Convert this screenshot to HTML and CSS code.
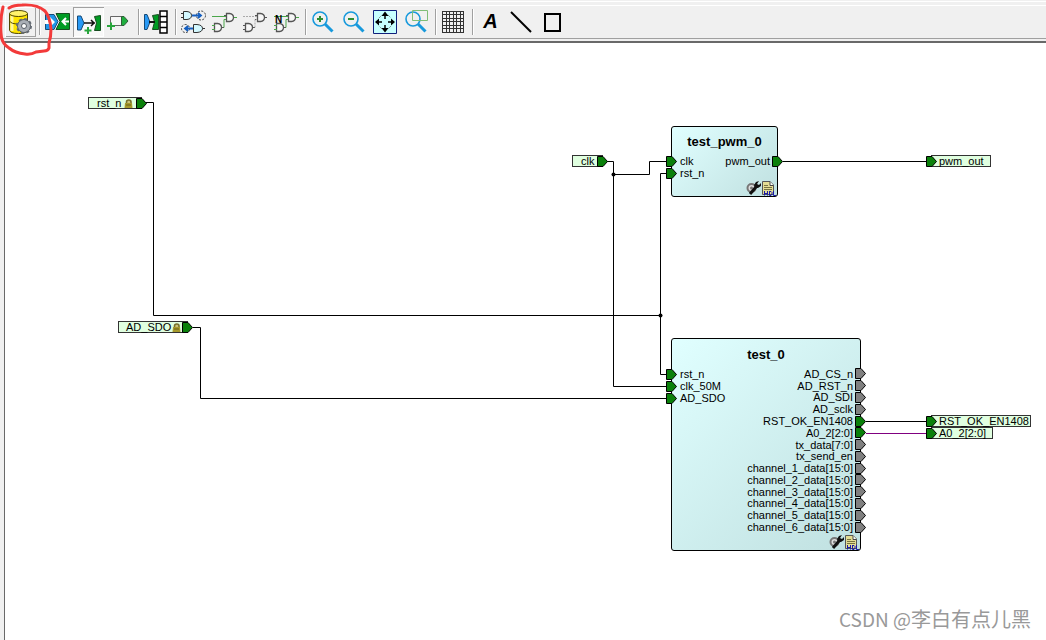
FILE: index.html
```html
<!DOCTYPE html>
<html lang="en">
<head>
<meta charset="utf-8">
<title>SmartDesign canvas</title>
<link rel="stylesheet" href="styles.css">
</head>
<body>
<svg class="defs" aria-hidden="true">
  <defs>
    <symbol id="pin" viewBox="0 0 11 11"><path d="M.5 .5H6L10.5 5.5L6 10.5H.5Z" stroke="#000"/></symbol>
    <symbol id="lock" viewBox="0 0 9 9"><path d="M2.5 5V3Q2.5 1 4.8 1Q7 1 7 3V5" fill="#c9c27a" stroke="#77702b" stroke-width="1.6"/><path d="M1 4H8L8.5 9H.5Z" fill="#a69a2c"/><path d="M2 6H7" stroke="#685e18"/></symbol>
    <symbol id="tools" viewBox="0 0 31 16">
      <circle cx="5.500" cy="8" r="4" fill="#ddd" stroke="#777" stroke-width="2"/><circle cx="5.500" cy="8" r="1.500" fill="#777"/>
      <path d="M4 14L10 7" stroke="#111" stroke-width="3"/><path d="M9 8L8 5L10 2L13 1L11 4L13 5L15 3V6L12 8Z" fill="#111"/>
      <path d="M16.500 1.500H24L27.500 5V14.500H16.500Z" fill="#e3dc94" stroke="#555"/><path d="M24 1.500V5.500H27.500" fill="#fff" stroke="#444"/><path d="M18 5.500H22M18 7.500H26M18 9.500H26" stroke="#77733f"/>
      <path d="M18.500 11V15.500M21.500 11V15.500M18.500 13.500H21.500M23.500 11V15.500H25L26 14V12.500L25 11.500H23.500M27.500 11V15.500H30" fill="none" stroke="#1a1aa8"/>
    </symbol>
    <symbol id="gate" viewBox="0 0 12 12"><path d="M2.500 1.500H5.500Q9.500 2 9.500 5.500Q9.500 9 5.500 9.500H2.500Z" fill="#f7f7f7" stroke="#555" stroke-width="1.300"/><path d="M0 3.500H2M0 7.500H2M10 5.500H12" stroke="#555"/></symbol>
    <symbol id="glass" viewBox="0 0 31 30"><path d="M17 17L24.500 24.500" stroke="#1799dc" stroke-width="3"/><circle cx="12" cy="12" r="7" fill="none" stroke="#1799dc" stroke-width="1.600"/></symbol>
  </defs>
</svg>

<header class="toolbar" role="toolbar" aria-label="Canvas tools">
  <button class="tool raised" aria-label="Generate component"><svg class="icon" viewBox="0 0 31 30">
    <path d="M4.500 6.500V23Q5 26.500 13.500 26.500T22.500 23V6.500" fill="#ffe500" stroke="#4f4700"/><path d="M7 9V24" stroke="#fff79a" stroke-width="3"/><ellipse cx="13.500" cy="6.500" rx="9" ry="3" fill="#fff36b" stroke="#4f4700"/><path d="M4.500 14Q6 17 13.500 17T22.500 14" fill="none" stroke="#4f4700"/>
    <circle cx="19" cy="19" r="6.500" fill="#a9aeb5" stroke="#555b63"/><circle cx="19" cy="19" r="7" fill="none" stroke="#656b73" stroke-width="2" stroke-dasharray="3 2.500"/><circle cx="19" cy="19" r="5.500" fill="#a9aeb5"/><circle cx="19" cy="19" r="2.500" fill="#fff" stroke="#555b63"/></svg></button>
  <span class="separator"></span>
  <button class="tool" aria-label="Auto connect"><svg class="icon" viewBox="0 0 31 30">
    <path d="M3.500 7.500H12L16 14.500L12 22.500H3.500Z" fill="#1f96e8" stroke="#174a75"/><path d="M3 13H8V10L13 15L8 20V17H3Z" fill="#fff"/><path d="M14 6.500H27.500V22.500H14L18 14.500Z" fill="#009b23" stroke="#174d20"/><path d="M27 14.500H21M24 11L20.500 14.500L24 18" fill="none" stroke="#fff" stroke-width="2"/></svg></button>
  <button class="tool pressed" aria-label="Connection mode" aria-pressed="true"><svg class="icon" viewBox="0 0 31 30">
    <path d="M4.500 9H8L11 16L8 23H4.500Z" fill="#2899f5" stroke="#174a75"/><path d="M21.500 9.500L27.500 8.500V23.500H21.500L23.500 16Z" fill="#009b23" stroke="#174d20"/><path d="M11 16H22M18 13L21 16L18 19" fill="none" stroke="#111" stroke-width="1.500"/><path d="M15 20V27M11.500 23.500H18.500" stroke="#28a53c" stroke-width="2"/></svg></button>
  <button class="tool" aria-label="Add port"><svg class="icon" viewBox="0 0 31 30">
    <path d="M6.500 17V9.500H17.500V18.500H10" fill="#f7f7f7" stroke="#666"/><path d="M17.500 9.500H20L24 14L20 18.500H17.500Z" fill="#1fae3e" stroke="#315c39"/><path d="M7 15.500V23M3 19H11" stroke="#28a53c" stroke-width="2"/></svg></button>
  <span class="separator"></span>
  <button class="tool" aria-label="Memory map"><svg class="icon" viewBox="0 0 31 30">
    <path d="M3.500 7.500H6L9 15L6 22.500H3.500Z" fill="#2899f5" stroke="#174a75"/><path d="M11.500 8.500L17.500 7.500V22.500H11.500L13.500 15Z" fill="#009b23" stroke="#174d20"/><path d="M8 15H14" stroke="#111" stroke-width="2"/><path d="M19 4H26V26H19ZM19 9.500H26M19 15H26M19 20.500H26" fill="#fff" stroke="#000" stroke-width="1.500"/></svg></button>
  <span class="separator"></span>
  <button class="tool" aria-label="Expand logic"><svg class="icon" viewBox="0 0 31 30">
    <path d="M5.500 4.500H9Q13.500 5 13.500 8.500T9 12.500H5.500Z" fill="#d3f8ff" stroke="#333"/><path d="M3 6.500H5M3 10.500H5" stroke="#333"/><circle cx="23" cy="8.500" r="4.500" fill="none" stroke="#333" stroke-dasharray="2 1.500"/><path d="M14 8.500H22M20 6L23 8.500L20 11" fill="none" stroke="#155fc0" stroke-width="1.800"/>
    <path d="M15.500 17.500H19Q24.500 18 24.500 21.500T19 25.500H15.500Z" fill="#d3f8ff" stroke="#333"/><path d="M24.500 21.500H27" stroke="#333"/><circle cx="7.500" cy="21.500" r="4" fill="none" stroke="#333" stroke-dasharray="2 1.500"/><path d="M15 21.500H7M10 19L7 21.500L10 24" fill="none" stroke="#155fc0" stroke-width="1.800"/></svg></button>
  <button class="tool" aria-label="Show nets"><svg class="icon" viewBox="0 0 31 30">
    <use href="#gate" x="15" y="5" width="12" height="12"/><use href="#gate" x="3" y="15" width="12" height="12"/><path d="M3 9.500H17M15 20.500V12.500H17M3 18.500H6M3 22.500H6M25 10.500H28" fill="none" stroke="#4aa64a"/></svg></button>
  <button class="tool" aria-label="Hide nets"><svg class="icon" viewBox="0 0 31 30">
    <use href="#gate" x="15" y="5" width="12" height="12"/><use href="#gate" x="3" y="15" width="12" height="12"/><path d="M3 9.500H17M15 20.500V12.500H17" fill="none" stroke="#aaa" stroke-dasharray="2 1"/></svg></button>
  <button class="tool" aria-label="Show net names"><svg class="icon" viewBox="0 0 31 30">
    <use href="#gate" x="15" y="5" width="12" height="12"/><use href="#gate" x="3" y="15" width="12" height="12"/><path d="M3 9.500H17M15 20.500V12.500H17M3 18.500H6M3 22.500H6M25 10.500H28" fill="none" stroke="#4aa64a"/><text class="net-letter" x="4" y="16">N</text></svg></button>
  <span class="separator"></span>
  <button class="tool" aria-label="Zoom in"><svg class="icon" viewBox="0 0 31 30"><use href="#glass"/><path d="M9 12H15M12 9V15" stroke="#2f8e31" stroke-width="2"/></svg></button>
  <button class="tool" aria-label="Zoom out"><svg class="icon" viewBox="0 0 31 30"><use href="#glass"/><path d="M9 12H15" stroke="#2f8e31" stroke-width="2"/></svg></button>
  <button class="tool" aria-label="Zoom to fit"><svg class="icon" viewBox="0 0 31 30">
    <path d="M3.500 3.500H26.500V26.500H3.500Z" fill="#c8ffff" stroke="#10207c"/><path d="M15 4.500L18.500 9H11.500ZM15 25.500L18.500 21H11.500ZM5 15L9 11.500V18.500ZM25 15L21 11.500V18.500Z" fill="#000"/><path d="M15 9V12M15 18V21M9 15H12M18 15H21" stroke="#000" stroke-width="1.500"/><path d="M9 11L12 8M18 8L21 11M21 19L18 22M12 22L9 19" stroke="#666" stroke-dasharray="1 1"/></svg></button>
  <button class="tool" aria-label="Zoom to area"><svg class="icon" viewBox="0 0 31 30"><use href="#glass"/><path d="M11.500 3.500H26.500V13.500H11.500Z" fill="none" stroke="#7fbd77"/></svg></button>
  <span class="separator"></span>
  <button class="tool" aria-label="Grid"><svg class="icon" viewBox="0 0 31 30">
    <path d="M4.500 4V26M8.500 4V26M11.500 4V26M15.500 4V26M18.500 4V26M22.500 4V26M25.500 4V26M4 4.500H26M4 7.500H26M4 11.500H26M4 14.500H26M4 18.500H26M4 21.500H26M4 25.500H26" stroke="#333"/></svg></button>
  <span class="separator"></span>
  <button class="tool letter" aria-label="Add text">A</button>
  <button class="tool" aria-label="Add line"><svg class="icon" viewBox="0 0 31 30"><path d="M5 5L25 25" stroke="#000" stroke-width="2"/></svg></button>
  <button class="tool" aria-label="Add rectangle"><svg class="icon" viewBox="0 0 31 30"><path d="M8 7H23V24H8Z" fill="none" stroke="#000" stroke-width="2"/></svg></button>
</header>

<main class="canvas">
  <svg class="nets" viewBox="5 43 1041 597" aria-hidden="true">
    <path class="net" d="M146 102.500H153.500V315.500H660.500M667 374.500H660.500V173.500H667M606 161.500H613.500V386.500H667M613.500 174.500H649.500V161.500H667M193 327.500H200.500V398.500H667M783 161.500H927M866 421.500H927"/>
    <path class="net bus" d="M866 433.500H927"/>
    <circle cx="613.500" cy="174.500" r="2"/><circle cx="660.500" cy="315.500" r="2"/>
  </svg>

  <div class="port input port-rst"><span class="flag">rst_n<svg class="lock"><use href="#lock"/></svg></span><svg class="pin"><use href="#pin"/></svg></div>
  <div class="port input tight port-sdo"><span class="flag">AD_SDO<svg class="lock"><use href="#lock"/></svg></span><svg class="pin"><use href="#pin"/></svg></div>
  <div class="port input port-clk"><span class="flag">clk</span><svg class="pin"><use href="#pin"/></svg></div>
  <div class="port output port-pwm"><svg class="pin"><use href="#pin"/></svg><span class="flag">pwm_out</span></div>
  <div class="port output tight port-ok"><svg class="pin"><use href="#pin"/></svg><span class="flag">RST_OK_EN1408</span></div>
  <div class="port output port-a0"><svg class="pin"><use href="#pin"/></svg><span class="flag">A0_2[2:0]</span></div>

  <section class="block block-pwm">
    <h2 class="title">test_pwm_0</h2>
    <div class="sides">
      <ul class="pins left">
        <li><svg class="pin"><use href="#pin"/></svg>clk</li>
        <li><svg class="pin"><use href="#pin"/></svg>rst_n</li>
      </ul>
      <ul class="pins right">
        <li>pwm_out<svg class="pin"><use href="#pin"/></svg></li>
      </ul>
    </div>
    <svg class="tools"><use href="#tools"/></svg>
  </section>

  <section class="block block-test">
    <h2 class="title">test_0</h2>
    <div class="sides">
      <ul class="pins left">
        <li><svg class="pin"><use href="#pin"/></svg>rst_n</li>
        <li><svg class="pin"><use href="#pin"/></svg>clk_50M</li>
        <li><svg class="pin"><use href="#pin"/></svg>AD_SDO</li>
      </ul>
      <ul class="pins right all">
        <li>AD_CS_n<svg class="pin unused"><use href="#pin"/></svg></li>
        <li>AD_RST_n<svg class="pin unused"><use href="#pin"/></svg></li>
        <li>AD_SDI<svg class="pin unused"><use href="#pin"/></svg></li>
        <li>AD_sclk<svg class="pin unused"><use href="#pin"/></svg></li>
        <li>RST_OK_EN1408<svg class="pin"><use href="#pin"/></svg></li>
        <li>A0_2[2:0]<svg class="pin"><use href="#pin"/></svg></li>
        <li>tx_data[7:0]<svg class="pin unused"><use href="#pin"/></svg></li>
        <li>tx_send_en<svg class="pin unused"><use href="#pin"/></svg></li>
        <li>channel_1_data[15:0]<svg class="pin unused"><use href="#pin"/></svg></li>
        <li>channel_2_data[15:0]<svg class="pin unused"><use href="#pin"/></svg></li>
        <li>channel_3_data[15:0]<svg class="pin unused"><use href="#pin"/></svg></li>
        <li>channel_4_data[15:0]<svg class="pin unused"><use href="#pin"/></svg></li>
        <li>channel_5_data[15:0]<svg class="pin unused"><use href="#pin"/></svg></li>
        <li>channel_6_data[15:0]<svg class="pin unused"><use href="#pin"/></svg></li>
      </ul>
    </div>
    <svg class="tools"><use href="#tools"/></svg>
  </section>

  <p class="watermark"><span class="brand">CSDN @</span>李白有点儿黑</p>
</main>

<svg class="annotation" viewBox="0 0 60 60" aria-hidden="true"><path d="M9 8Q14 5 22 5Q37 4 45 11Q50 17 51 29Q51 37 49 43V48Q48 51 44 51L36 52Q31 55 25 54Q15 53 9 48Q1 43 1 33Q0 19 3 7"/></svg>
</body>
</html>
```
FILE: styles.css
```css
* {
  box-sizing: border-box;
}

body {
  display: flex;
  flex-direction: column;
  min-height: 100vh;
  margin: 0;
  background: #f0f0f0;
  color: #000;
  font-family: "Liberation Sans", Arial, sans-serif;
  font-size: 11px;
}

.defs {
  position: absolute;
  width: 0;
  height: 0;
}

.toolbar {
  display: flex;
  align-items: center;
  height: 39px;
  padding: 6px 5px 1px;
  border-bottom: 1px solid #a0a0a0;
  background: linear-gradient(#f0f0f0 1px, #fff 1px 2px, #f0f0f0 2px 5px, #fff 5px 6px, #f0f0f0 6px);
}

.tool {
  flex: none;
  width: 31px;
  height: 30px;
  padding: 0;
  border: 0;
  background: none;
}

.icon {
  display: block;
  width: 31px;
  height: 30px;
}

.raised {
  box-shadow: inset 1px 1px #fff, inset -1px -1px #a0a0a0;
}

.pressed {
  background: #f8f8f8;
  box-shadow: inset 1px 1px #a0a0a0, inset -1px -1px #fff;
}

.letter {
  font: italic bold 20px "Liberation Sans", Arial, sans-serif;
}

.net-letter {
  font: bold 10px "Liberation Sans", Arial, sans-serif;
}

.separator {
  flex: none;
  width: 2px;
  height: 26px;
  margin: 0 1px 0 3px;
  border-left: 1px solid #a0a0a0;
  border-right: 1px solid #fff;
}

.canvas {
  position: relative;
  flex: 1;
  margin: 2px 0 0 4px;
  border-top: 2px solid #696969;
  border-left: 1px solid #696969;
  background: #fff;
  overflow: hidden;
}

.nets {
  position: absolute;
  top: 0;
  left: 0;
  width: 1041px;
  height: 597px;
}

.net {
  fill: none;
  stroke: #000;
}

.bus {
  stroke: #800080;
}

.pin {
  flex: none;
  width: 11px;
  height: 11px;
  fill: #0a800a;
}

.unused {
  fill: #808080;
}

.port {
  position: absolute;
  display: flex;
  align-items: center;
}

.flag {
  display: flex;
  align-items: center;
  gap: 3px;
  height: 12px;
  border: 1px solid #333;
  background: #e0ffe0;
  line-height: 10px;
}

.input .flag {
  padding: 0 8px;
}

.input .pin {
  margin-left: -6px;
}

.output .flag {
  padding: 0 6px 0 7px;
  margin-left: -6px;
}

.output .pin {
  z-index: 1;
}

.input.tight .flag {
  gap: 1px;
  padding: 0 6px 0 7px;
}

.output.tight .flag {
  padding-right: 1px;
}

.lock {
  width: 9px;
  height: 9px;
}

.port-rst { left: 83px; top: 54px; }
.port-sdo { left: 113px; top: 278px; }
.port-clk { left: 567px; top: 112px; }
.port-pwm { left: 921px; top: 112px; }
.port-ok { left: 921px; top: 372px; }
.port-a0 { left: 921px; top: 384px; }

.block {
  position: absolute;
  display: flex;
  flex-direction: column;
  border: 1px solid #000;
  border-radius: 3px;
  background: linear-gradient(135deg, #e0ffff, #c0e0e0);
}

.block-pwm {
  left: 666px;
  top: 83px;
  width: 107px;
  height: 71px;
}

.block-test {
  left: 666px;
  top: 295px;
  width: 190px;
  height: 213px;
}

.title {
  margin: 7px 0 5px;
  font-size: 13px;
  line-height: 16px;
  text-align: center;
}

.block-test .title {
  margin-top: 8px;
}

.sides {
  display: flex;
  justify-content: space-between;
}

.pins {
  display: flex;
  flex-direction: column;
  margin: 0;
  padding: 0;
  list-style: none;
  line-height: 12px;
}

.pins li {
  display: flex;
  align-items: center;
  height: 12px;
}

.left li {
  gap: 3px;
  margin-left: -6px;
}

.right li {
  justify-content: flex-end;
  gap: 2px;
  margin-right: -6px;
}

.all {
  height: 165px;
}

.all li {
  flex: 1;
  height: auto;
  min-height: 0;
}

.tools {
  width: 31px;
  height: 16px;
  margin: auto 0 0 auto;
}

.watermark {
  position: absolute;
  right: 15px;
  bottom: 7px;
  margin: 0;
  color: #999;
  font: 400 20px/28px "Noto Sans CJK SC", sans-serif;
}

.brand {
  font-size: 19px;
}

.annotation {
  position: absolute;
  top: 0;
  left: 0;
  width: 60px;
  height: 60px;
  fill: none;
  stroke: #f33a3a;
  stroke-width: 3;
  stroke-linecap: round;
  pointer-events: none;
}
```
